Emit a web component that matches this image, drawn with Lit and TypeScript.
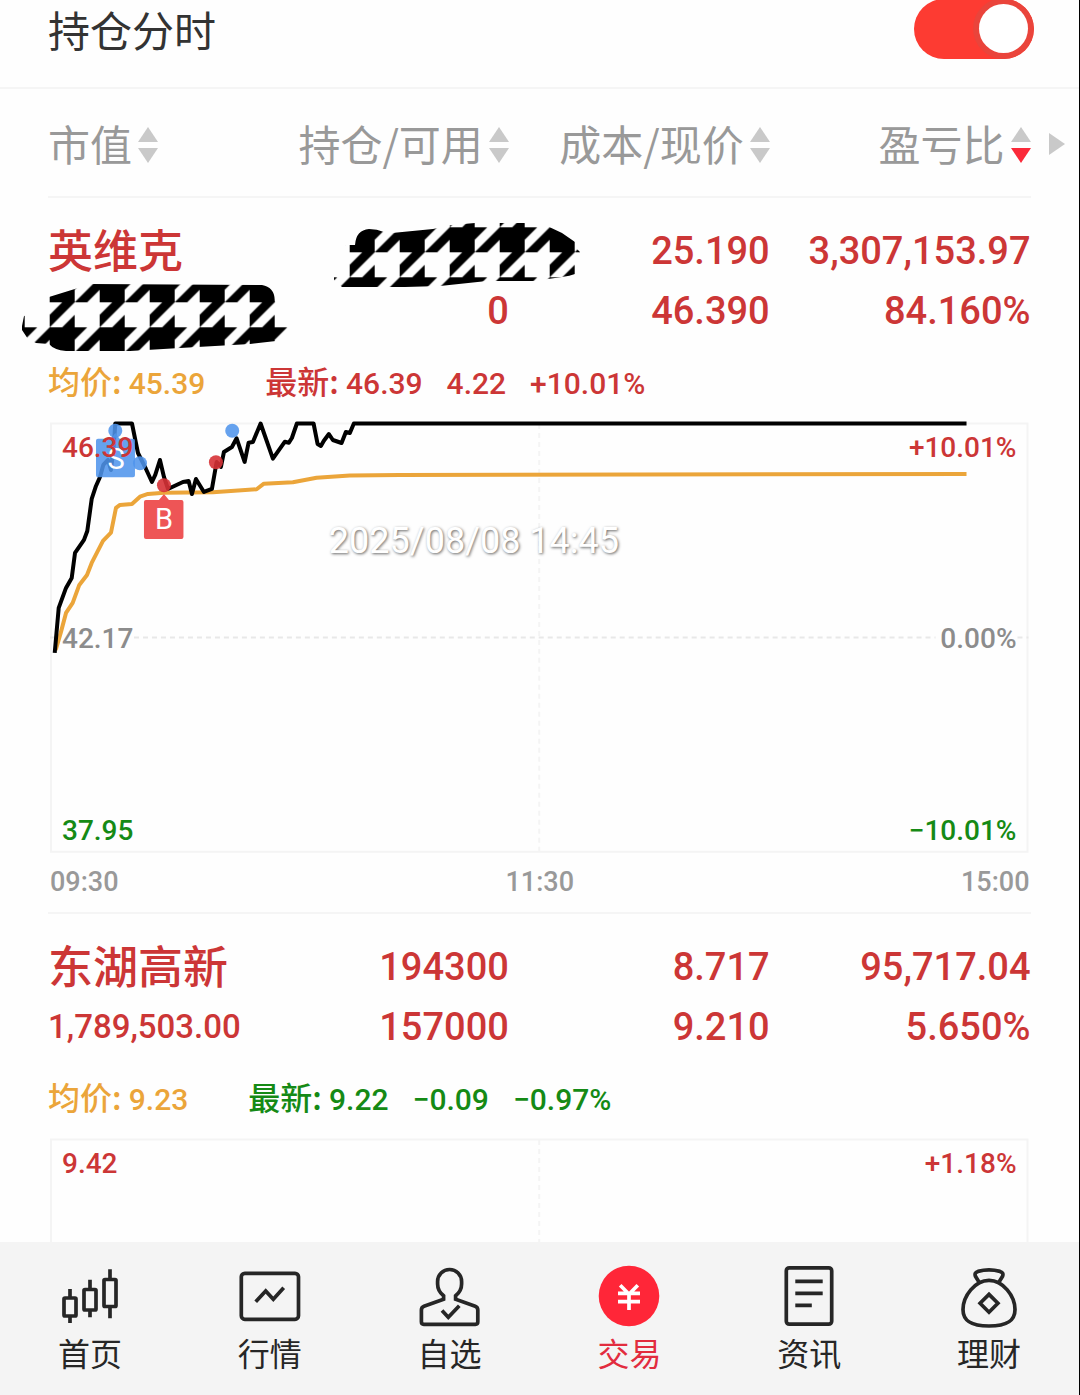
import { LitElement, html, svg, css, nothing } from "lit";
import type { TemplateResult, SVGTemplateResult } from "lit";
import { customElement, property, state } from "lit/decorators.js";
import { classMap } from "lit/directives/class-map.js";

type Tone = "up" | "down" | "flat";

interface Mark {
  x: number;
  y: number;
  side: "buy" | "sell";
}

interface ChartData {
  levels: { price: string; change: string; tone: Tone }[];
  price: number[][];
  average: number[][];
  marks: Mark[];
  stamp?: string;
  axis: string[];
}

interface Holding {
  name: string;
  value: string | null;
  amount: string | null;
  usable: string;
  cost: string;
  current: string;
  profit: string;
  ratio: string;
  average: string;
  latest: string;
  diff: string;
  diffRatio: string;
  tone: Tone;
  chart: ChartData;
}

const HOLDINGS: Holding[] = [
  {
    name: "英维克",
    value: null,
    amount: null,
    usable: "0",
    cost: "25.190",
    current: "46.390",
    profit: "3,307,153.97",
    ratio: "84.160%",
    average: "45.39",
    latest: "46.39",
    diff: "4.22",
    diffRatio: "+10.01%",
    tone: "up",
    chart: {
      levels: [
        { price: "46.39", change: "+10.01%", tone: "up" },
        { price: "42.17", change: "0.00%", tone: "flat" },
        { price: "37.95", change: "−10.01%", tone: "down" },
      ],
      price: [
        [4.7, 231], [8.7, 186], [16, 166], [21.7, 156], [25, 131], [34, 118], [37.3, 109], [41.7, 77],
        [46, 64], [50, 55], [53.3, 43], [58, 38], [61, 48], [64, 21], [65.3, 1.5], [82, 1.5], [88, 31],
        [96, 47], [102, 60], [105.3, 53], [110, 38], [114, 55], [118, 67], [133, 60], [138.7, 59],
        [142, 72], [146, 57], [154, 70], [162, 67], [166.7, 40], [171, 45], [174, 30], [182, 25],
        [186.7, 16.3], [194.7, 40], [198.7, 20.7], [203, 20], [210.7, 1.5], [223, 36.7], [235, 19.7],
        [239, 20.7], [242, 16], [247, 1.5], [263.7, 1.5], [267.7, 22], [271, 24], [274, 18.7],
        [279, 12], [283, 18], [291.7, 21], [296, 10], [300, 11], [304, 1.5], [917, 1.5],
      ],
      average: [
        [5.7, 228], [10.7, 211], [16, 191], [22.7, 181], [29.3, 163], [37, 153], [41.7, 141], [53, 119],
        [61, 110.7], [66, 86], [70, 83], [82, 82], [90, 74.7], [98, 72], [114, 70.7], [163, 70.3],
        [206.7, 67.3], [214, 61.7], [243, 60.3], [266.7, 55.7], [300, 53.6], [350, 53], [917, 52],
      ],
      marks: [
        { x: 65.3, y: 8.7, side: "sell" },
        { x: 90, y: 41.3, side: "sell" },
        { x: 182.3, y: 8.7, side: "sell" },
        { x: 114, y: 63.3, side: "buy" },
        { x: 166, y: 40.3, side: "buy" },
      ],
      stamp: "2025/08/08 14:45",
      axis: ["09:30", "11:30", "15:00"],
    },
  },
  {
    name: "东湖高新",
    value: "1,789,503.00",
    amount: "194300",
    usable: "157000",
    cost: "8.717",
    current: "9.210",
    profit: "95,717.04",
    ratio: "5.650%",
    average: "9.23",
    latest: "9.22",
    diff: "−0.09",
    diffRatio: "−0.97%",
    tone: "down",
    chart: {
      levels: [{ price: "9.42", change: "+1.18%", tone: "up" }],
      price: [],
      average: [],
      marks: [],
      axis: [],
    },
  },
];

const COLUMNS = ["市值", "持仓/可用", "成本/现价", "盈亏比"];

const ICONS: Record<string, SVGTemplateResult> = {
  candles: svg`
    <rect x="6" y="33" width="12" height="18" rx="1" />
    <rect x="26" y="24.5" width="12" height="20.5" rx="1" />
    <rect x="46" y="14.5" width="12" height="27" rx="1" />
    <path d="M12 24V33M12 51V58M32 14.7V24.5M32 45V52.3M52 4.3V14.5M52 41.5V53.3" />`,
  quotes: svg`
    <rect x="3.3" y="8.3" width="57.2" height="46" rx="3.5" />
    <path d="M17.7 36.7L27.7 26L35.3 34.3L45.7 22.7" />`,
  person: svg`
    <path d="M25.6 34.3L6 41.2Q3.4 42.2 3.4 45V56.8Q3.4 59.3 5.8 59.3H57.4Q59.8 59.3 59.8 56.8V45Q59.8 42.2 57.2 41.2L37.6 34.3V30.8Q43.6 26 43.6 19V16.5A12 12 0 0 0 19.6 16.5V19Q19.6 26 25.6 30.8Z" />
    <path d="M24 45.6L30.3 52.3L41.3 40.7" />`,
  trade: svg`
    <circle class="disc" cx="32" cy="31" r="30.3" />
    <path class="yen" d="M23.2 20.2L32 29.2L40.8 20.2M21 28.4H43M21 36.7H43M32 28.4V45" />`,
  news: svg`
    <rect x="9.3" y="2.8" width="45.4" height="56.4" rx="3" />
    <path d="M18.3 16.3H45.7M18.3 28.3H45.7M18.3 40.3H34.8" />`,
  bag: svg`
    <path d="M32 15.3C18 15.3 6 31 6 44.5C6 56 14 61 32 61C50 61 58 56 58 44.5C58 31 46 15.3 32 15.3Z" />
    <path d="M22.6 18L18.6 11.6Q16.8 7.8 21 6.4Q32 3.4 43 6.4Q47.2 7.8 45.4 11.6L41.4 18" />
    <path d="M32 29.4L40.9 38.3L32 47.2L23.1 38.3Z" />`,
};

const TABS = [
  { label: "首页", icon: "candles" },
  { label: "行情", icon: "quotes" },
  { label: "自选", icon: "person" },
  { label: "交易", icon: "trade" },
  { label: "资讯", icon: "news" },
  { label: "理财", icon: "bag" },
];

const shared = css`
  * {
    box-sizing: border-box;
  }
  .up {
    color: #cc3636;
  }
  .down {
    color: #158a15;
  }
  .flat {
    color: #8c8c8c;
  }
`;

/** Houndstooth brush stroke that hides a private figure. */
@customElement("privacy-stroke")
export class PrivacyStroke extends LitElement {
  @property() box = "0 0 100 100";
  @property() shape = "";

  static styles = css`
    :host {
      display: block;
    }
    svg {
      display: block;
    }
  `;

  render() {
    const [, , width, height] = this.box.split(" ");
    return html`<svg width=${width} height=${height} viewBox=${this.box} role="img" aria-label="已隐藏">
      <defs>
        <pattern id="check" x="49.7" y="27.3" width="50" height="50" patternUnits="userSpaceOnUse">
          <path d="M0 0H37.5L25 12.5V25L50 0V12.5L37.5 25H25L0 50V37.5L12.5 25H0ZM25 37.5V50H12.5Z" />
        </pattern>
      </defs>
      <path d=${this.shape} fill="url(#check)" />
    </svg>`;
  }
}

@customElement("minute-chart")
export class MinuteChart extends LitElement {
  @property({ attribute: false }) data!: ChartData;

  static styles = [
    shared,
    css`
      :host {
        display: block;
        font-family: Roboto, "Noto Sans CJK SC", sans-serif;
      }
      .plot {
        display: grid;
        position: relative;
        margin: 0 2px;
      }
      .canvas,
      .levels {
        grid-area: 1 / 1;
      }
      .canvas {
        display: block;
        width: 100%;
        height: auto;
        overflow: visible;
      }
      .levels {
        display: flex;
        flex-direction: column;
        justify-content: space-between;
        padding: 8px 12px 4px;
        font-size: 28px;
        line-height: 36px;
        font-weight: 500;
      }
      .level {
        display: flex;
        justify-content: space-between;
      }
      .frame {
        fill: none;
        stroke: #f4f4f4;
        stroke-width: 2;
      }
      .grid {
        stroke: #e8e8e8;
        stroke-width: 2;
        stroke-dasharray: 5 4;
      }
      .grid.faint {
        stroke: #f4f4f4;
      }
      .price,
      .average {
        fill: none;
        stroke-width: 4;
        stroke-linejoin: round;
      }
      .price {
        stroke: #000;
      }
      .average {
        stroke: #eba53a;
      }
      .sell {
        fill: #4f94ec;
        fill-opacity: 0.87;
      }
      .buy {
        fill: #d63236;
        fill-opacity: 0.9;
      }
      .buy-flag {
        fill: #ee5556;
      }
      .flag {
        fill: #fff;
        font-size: 29px;
        text-anchor: middle;
      }
      .stamp {
        position: absolute;
        left: 28.5%;
        top: 23%;
        margin: 0;
        color: #fff;
        font-size: 36px;
        line-height: 40px;
        text-shadow: 1px 1px 3px #666;
      }
      .axis {
        display: flex;
        justify-content: space-between;
        margin-top: 11px;
        padding: 0 1px 0 2px;
        color: #999;
        font-size: 27px;
        line-height: 36px;
        font-weight: 500;
      }
    `,
  ];

  private points(list: number[][]) {
    return list.map((p) => p.join(",")).join(" ");
  }

  private series() {
    const d = this.data;
    return svg`
      <path class="grid" d="M0 215.5H10M84 215.5H886M968 215.5H979" />
      <polyline class="average" points=${this.points(d.average)} />
      <polyline class="price" points=${this.points(d.price)} />
      ${d.marks.map((m) => svg`<circle class=${m.side} cx=${m.x} cy=${m.y} r="7" />`)}
      <path class="sell" d="M48 16.7H61L65.3 11L69.6 16.7H83Q85 16.7 85 18.7V53.3Q85 55.3 83 55.3H48Q46 55.3 46 53.3V18.7Q46 16.7 48 16.7Z" />
      <text class="flag" x="66" y="47">S</text>
      <path class="buy-flag" d="M96 78H109L114 72L119 78H131.5Q133.5 78 133.5 80V115Q133.5 117 131.5 117H96Q94 117 94 115V80Q94 78 96 78Z" />
      <text class="flag" x="114" y="107">B</text>`;
  }

  render() {
    const d = this.data;
    return html`
      <div class="plot">
        <svg class="canvas" viewBox="0 0 979 431">
          <rect class="frame" x="1" y="1.5" width="977" height="428.5" />
          <path class="grid faint" d="M489.5 2V430" />
          ${d.price.length ? this.series() : nothing}
        </svg>
        <div class="levels">
          ${d.levels.map(
            (l) => html`<div class="level ${l.tone}"><span>${l.price}</span><span>${l.change}</span></div>`,
          )}
        </div>
        ${d.stamp ? html`<p class="stamp">${d.stamp}</p>` : nothing}
      </div>
      ${d.axis.length ? html`<div class="axis">${d.axis.map((t) => html`<span>${t}</span>`)}</div>` : nothing}
    `;
  }
}

@customElement("app-root")
export class AppRoot extends LitElement {
  @state() private showCharts = true;
  @state() private sorted = 3;
  @state() private tab = 3;

  static styles = [
    shared,
    css`
      :host {
        display: flex;
        flex-direction: column;
        box-sizing: border-box;
        height: 100vh;
        border-right: 1px solid #000;
        background: #fefefe;
        color: #333;
        font-family: Roboto, "Noto Sans CJK SC", sans-serif;
      }
      button {
        border: 0;
        padding: 0;
        background: none;
        font: inherit;
        color: inherit;
        cursor: pointer;
      }
      .content {
        flex: 1;
        min-height: 0;
        overflow: hidden auto;
        scrollbar-width: none;
      }
      .setting {
        display: flex;
        align-items: center;
        justify-content: space-between;
        padding: 0 45px 29px 48px;
        border-bottom: 2px solid #f5f5f5;
        font-family: "Noto Sans CJK SC", sans-serif;
        font-size: 42px;
        line-height: 58px;
      }
      .switch {
        appearance: none;
        display: flex;
        justify-content: flex-start;
        width: 120px;
        height: 60px;
        margin: -1px 0;
        padding: 5px 6px;
        border-radius: 30px;
        background: #ccc;
        overflow: hidden;
      }
      .switch::before {
        content: "";
        width: 49px;
        height: 49px;
        border-radius: 50%;
        background: #fff;
      }
      .switch:checked {
        justify-content: flex-end;
        background: #fd3b32;
      }
      .switch:checked::before {
        box-shadow: 0 0 0 6px #ea443b;
      }
      .holdings {
        width: calc(100% - 48px);
        margin-left: 48px;
        table-layout: fixed;
        border-collapse: separate;
        border-spacing: 0;
      }
      .col-value {
        width: 22.8%;
      }
      .col-amount {
        width: 21.9%;
      }
      .col-wide {
        width: 25.3%;
      }
      th,
      td {
        padding: 0;
        font-weight: 400;
        text-align: right;
        vertical-align: top;
      }
      .first {
        text-align: left;
      }
      .head {
        height: 109px;
        vertical-align: middle;
        color: #999;
        font-family: "Noto Sans CJK SC", sans-serif;
        font-size: 42px;
        line-height: 60px;
        white-space: nowrap;
      }
      .ruled {
        border-bottom: 2px solid #f5f5f5;
      }
      .sort {
        display: inline-flex;
        align-items: center;
        gap: 6px;
        vertical-align: middle;
      }
      .caption {
        padding-bottom: 4px;
      }
      .arrows {
        fill: #c9c9c9;
      }
      .active .lower {
        fill: #fb2a3a;
      }
      .more {
        display: block;
        padding-left: 18px;
      }
      .more svg {
        display: block;
        fill: #c9c9c9;
      }
      .figures {
        padding-top: 23px;
        font-size: 38px;
        line-height: 60px;
        font-weight: 500;
      }
      .line {
        position: relative;
        height: 60px;
      }
      .name {
        font-family: "Noto Sans CJK SC", sans-serif;
        font-size: 45px;
        line-height: 56px;
      }
      .small {
        font-size: 33px;
      }
      .hide-value {
        position: absolute;
        left: -28px;
        top: -1px;
      }
      .hide-amount {
        position: absolute;
        right: -73px;
        top: -1px;
      }
      .detail {
        padding: 18px 0 12px;
        text-align: left;
      }
      .quote {
        display: flex;
        align-items: baseline;
        gap: 24px;
        margin-bottom: 13px;
        font-size: 30px;
        line-height: 50px;
        font-weight: 500;
        white-space: pre;
      }
      .mean {
        margin-right: 36px;
        color: #eba53a;
      }
      .tag {
        font-family: "Noto Sans CJK SC", sans-serif;
        font-size: 32px;
        line-height: 32px;
      }
      .tabs {
        display: grid;
        grid-template-columns: repeat(6, 1fr);
        padding: 23px 0;
        background: #f4f4f4;
        color: #262626;
      }
      .tab {
        display: flex;
        flex-direction: column;
        align-items: center;
        gap: 3px;
        font-family: "Noto Sans CJK SC", sans-serif;
        font-size: 32px;
        line-height: 40px;
      }
      .tab.current {
        color: #e22c3e;
      }
      .icon {
        width: 64px;
        height: 64px;
        fill: none;
        stroke: #262626;
        stroke-width: 3.7;
      }
      .disc {
        fill: #ff2638;
        stroke: none;
      }
      .yen {
        stroke: #fff;
      }
    `,
  ];

  private header(label: string, index: number): TemplateResult {
    return html`<th scope="col" class=${classMap({ head: true, ruled: true, first: index === 0 })}>
      <button
        class=${classMap({ sort: true, active: this.sorted === index })}
        @click=${() => (this.sorted = index)}
      >
        <span class="caption">${label}</span>
        <svg class="arrows" width="20" height="36" viewBox="0 0 20 36" aria-hidden="true">
          <path d="M10 0L20 15H0Z" />
          <path class="lower" d="M0 21H20L10 36Z" />
        </svg>
      </button>
    </th>`;
  }

  private holding(h: Holding): TemplateResult {
    return html`
      <tr>
        <td class="figures first up">
          <div class="line name">${h.name}</div>
          <div class="line small">
            ${h.value ??
            html`<privacy-stroke
              class="hide-value"
              box="20 -20 270 74"
              shape="M22 26L24 16L36 12L49 -3L78 -12L92 -16L262 -15Q274 -13 275 0L276 14L290 28L276 41L250 44L180 48L130 51H66Q54 50 49 44L36 43L28 39L22 30Z"
            ></privacy-stroke>`}
          </div>
        </td>
        <td class="figures up">
          <div class="line">
            ${h.amount ??
            html`<privacy-stroke
              class="hide-amount"
              box="332 -80 250 70"
              shape="M355 -55Q356 -70 369 -71Q377 -71 384 -68L392 -67L433 -71L452 -75L475 -77H524L545 -75L562 -67L575 -58V-53L580 -48L575 -26Q570 -24 562 -23L548 -21L535 -19H487L440 -14L405 -13H342L334 -20V-26L338 -36L345 -49V-55Z"
            ></privacy-stroke>`}
          </div>
          <div class="line">${h.usable}</div>
        </td>
        <td class="figures up">
          <div class="line">${h.cost}</div>
          <div class="line">${h.current}</div>
        </td>
        <td class="figures up">
          <div class="line">${h.profit}</div>
          <div class="line">${h.ratio}</div>
        </td>
        <td></td>
      </tr>
      ${this.showCharts
        ? html`<tr>
            <td class="detail ruled" colspan="4">
              <div class="quote ${h.tone}">
                <span class="mean"><span class="tag">均价: </span>${h.average}</span>
                <span><span class="tag">最新: </span>${h.latest}</span>
                <span>${h.diff}</span>
                <span>${h.diffRatio}</span>
              </div>
              <minute-chart .data=${h.chart}></minute-chart>
            </td>
            <td></td>
          </tr>`
        : nothing}
    `;
  }

  render() {
    return html`
      <main class="content">
        <div class="setting">
          <label for="charts">持仓分时</label>
          <input
            id="charts"
            class="switch"
            type="checkbox"
            role="switch"
            .checked=${this.showCharts}
            @change=${(e: Event) => (this.showCharts = (e.target as HTMLInputElement).checked)}
          />
        </div>
        <table class="holdings">
          <colgroup>
            <col class="col-value" />
            <col class="col-amount" />
            <col class="col-wide" />
            <col class="col-wide" />
            <col />
          </colgroup>
          <thead>
            <tr>
              ${COLUMNS.map((c, i) => this.header(c, i))}
              <td class="head first">
                <button class="more" aria-label="更多">
                  <svg width="16" height="22" viewBox="0 0 16 22"><path d="M0 0L16 11L0 22Z" /></svg>
                </button>
              </td>
            </tr>
          </thead>
          <tbody>
            ${HOLDINGS.map((h) => this.holding(h))}
          </tbody>
        </table>
      </main>
      <nav class="tabs">
        ${TABS.map(
          (t, i) => html`<button
            class=${classMap({ tab: true, current: i === this.tab })}
            @click=${() => (this.tab = i)}
          >
            <svg class="icon" viewBox="0 0 64 64" aria-hidden="true">${ICONS[t.icon]}</svg>
            ${t.label}
          </button>`,
        )}
      </nav>
    `;
  }
}
